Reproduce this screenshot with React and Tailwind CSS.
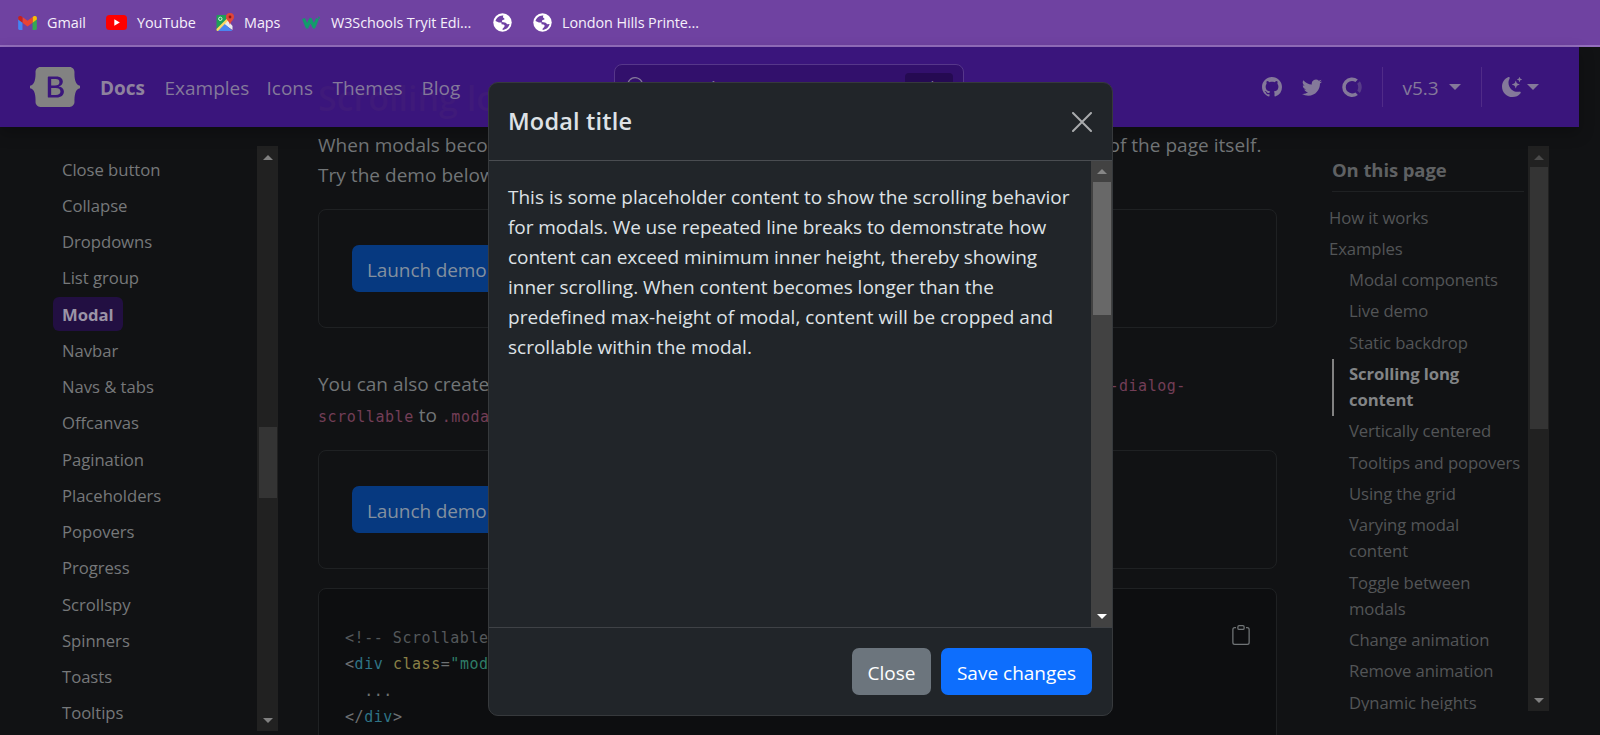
import React from "react";
import { BsGithub, BsTwitter, BsMoonStarsFill, BsClipboard, BsSearch } from "react-icons/bs";

const sideLinks = [
  "Close button", "Collapse", "Dropdowns", "List group", "Modal", "Navbar", "Navs & tabs", "Offcanvas",
  "Pagination", "Placeholders", "Popovers", "Progress", "Scrollspy", "Spinners", "Toasts", "Tooltips",
];

const subLinks = [
  ["Modal components"], ["Live demo"], ["Static backdrop"], ["Scrolling long", "content"], ["Vertically centered"],
  ["Tooltips and popovers"], ["Using the grid"], ["Varying modal", "content"], ["Toggle between", "modals"],
  ["Change animation"], ["Remove animation"], ["Dynamic heights"],
];

function Gmail() {
  return (
    <svg viewBox="0 0 20 15" className="h-[14px] w-[19px]">
      <path d="M0 2v11.500Q0 15 1.400 15H4.600V6.500z" fill="#4285f4" />
      <path d="M20 2v11.500Q20 15 18.600 15H15.400V6.500z" fill="#34a853" />
      <path d="M15.400 1.200v6L20 3.800V2c0-1.900-2-2.500-3.300-1.600z" fill="#fbbc04" />
      <path d="M4.600 7.200v-6L10 5.200l5.400-4v6L10 11.200z" fill="#ea4335" />
      <path d="M0 2v1.800l4.600 3.400v-6L3.300.4C2-.5 0 .1 0 2z" fill="#c5221f" />
    </svg>
  );
}

function YouTube() {
  return (
    <svg viewBox="0 0 21 15" className="h-[15px] w-[21px]">
      <rect width="21" height="15" rx="3.500" fill="#f00" />
      <path d="M8.300 4.300v6.400l5.500-3.200z" fill="#fff" />
    </svg>
  );
}

function Maps() {
  return (
    <svg viewBox="0 0 19 19" className="h-[19px] w-[19px]">
      <path d="M1.500 2H13v6L5 18H1.500Q.5 18 .5 17V3Q.5 2 1.500 2z" fill="#1e9e58" />
      <path d="M.5 16 11 5.500l2.500 2.500L3 18H1.500Q.5 18 .5 17z" fill="#fdd663" />
      <path d="M8.500 11.500l3.500-4 4.500 5.500v4z" fill="#e8eaed" />
      <path d="M2 18 8.800 11 16.500 18z" fill="#4a86f0" />
      <circle cx="4.300" cy="5.800" r="1.700" fill="none" stroke="#d7f0e0" />
      <path d="M14 0a4 4 0 0 1 4 4c0 3-3.300 4-4 8-.7-4-4-5-4-8a4 4 0 0 1 4-4z" fill="#e0453a" />
      <circle cx="14" cy="4" r="1.400" fill="#8b1a12" />
    </svg>
  );
}

function W3() {
  return (
    <svg viewBox="0 0 19 14" className="h-3.500 w-[19px]">
      <path d="M1.500 2.500 5 11 8.500 3.500 12 11l3.500-8.500" fill="none" stroke="#129b6c" strokeWidth="3.200" strokeLinejoin="round" />
      <path d="M16 1.200q2-.5 1.500 1-.5.800-1 .800" fill="none" stroke="#129b6c" />
    </svg>
  );
}

function Globe() {
  return (
    <svg viewBox="0 0 19 19" className="h-[19px] w-[19px]">
      <circle cx="9.500" cy="9.500" r="9.200" fill="#fff" />
      <path d="M9.300 2.400c-3.300.1-6 2.400-6.800 5.700l3.400 1.300 2.600.2v1.600l2 .4c1.300.4 1.400 1.500.7 2.300l-1.600 1.800v1.200c3.600-.1 6.200-2.400 7-5.800l-2.600.1c-.8-1.200-1.800-1.800-3.300-1.900-1.500-.2-2.300-1-1.600-1.900.9-.9 2.400-.3 2.400-1.500 0-.9-1.500-.9-1.500-2 0-.6.200-1 .5-1.400z" fill="#6f42a4" />
    </svg>
  );
}

function OpenCollective() {
  return (
    <svg viewBox="0 0 40 41" fillRule="evenodd" className="h-5 w-5 fill-[#84799a]">
      <path fillOpacity=".4" d="M32.800 21c0 2.400-.8 4.900-2 6.900l5.100 5.100c2.500-3.400 4.100-7.600 4.100-12 0-4.600-1.600-8.800-4-12.200L30.700 14c1.200 2 2 4.300 2 7z" />
      <path d="M20 33.700a12.800 12.800 0 0 1 0-25.600c2.600 0 5 .7 7 2.100L32 5a20 20 0 1 0 .1 31.900l-5-5.200a13 13 0 0 1-7 2z" />
    </svg>
  );
}

function Logo() {
  return (
    <svg viewBox="0 0 118 94" className="h-10 w-[50px] fill-[#828282]">
      <path fillRule="evenodd" clipRule="evenodd" d="M24.509 0c-6.733 0-11.715 5.893-11.492 12.284.214 6.140-.064 14.092-2.066 20.577C8.943 39.365 5.547 43.485 0 44.014v5.972c5.547.529 8.943 4.649 10.951 11.153 2.002 6.485 2.280 14.437 2.066 20.577C12.794 88.106 17.776 94 24.510 94H93.500c6.733 0 11.714-5.893 11.491-12.284-.214-6.140.064-14.092 2.066-20.577 2.009-6.504 5.396-10.624 10.943-11.153v-5.972c-5.547-.529-8.934-4.649-10.943-11.153-2.002-6.484-2.280-14.437-2.066-20.577C105.214 5.894 100.233 0 93.500 0H24.508zM80 57.863C80 66.663 73.436 72 62.543 72H44a2 2 0 01-2-2V24a2 2 0 012-2h18.437c9.083 0 15.044 4.920 15.044 12.474 0 5.302-4.010 10.049-9.119 10.880v.277C75.317 46.394 80 51.210 80 57.863zM60.521 28.340H49.948v14.934h8.905c6.884 0 10.680-2.772 10.680-7.727 0-4.643-3.264-7.207-9.012-7.207zM49.948 49.200v16.458H60.910c7.167 0 10.964-2.876 10.964-8.281 0-5.406-3.903-8.178-11.425-8.178H49.948z" />
    </svg>
  );
}

function Tri({ up, className }) {
  return (
    <svg viewBox="0 0 10 5" className={"h-[5px] w-2.5 " + className}>
      <path d={up ? "M0 5 5 0l5 5z" : "M0 0h10L5 5z"} />
    </svg>
  );
}

function Caret() {
  return (
    <svg viewBox="0 0 12 6" className="h-1.5 w-3 fill-[#84799a]">
      <path d="M0 0h12L6 6z" />
    </svg>
  );
}

function Code({ children }) {
  return <code className="font-['DejaVu_Sans_Mono',monospace] text-[15px] leading-none tracking-[0.540px] text-[#733e57]">{children}</code>;
}

function DemoCard() {
  return (
    <div className="flex h-[119px] w-[959px] rounded-lg border border-[#1f2123] pt-[35px] pl-[33px]">
      <div className="flex h-[47px] items-center rounded-[7px] bg-[#063980] px-[15px] pt-0.5 text-[19px] tracking-[-0.1px] text-[#83909f]">
        Launch demo modal
      </div>
    </div>
  );
}

export default function App() {
  return (
    <div className="relative flex h-[735px] w-[1600px] flex-col overflow-hidden bg-[#111214] font-['Open_Sans','Noto_Sans',sans-serif] font-stretch-[90%] whitespace-nowrap">
      <div className="flex h-[47px] shrink-0 items-center border-b-2 border-[#946fbe] bg-[#6f42a1] pl-[18px] text-[14.400px] tracking-[-0.050px] text-[#f6f0fb]">
        <Gmail />
        <span className="ml-2.5 w-[59px]">Gmail</span>
        <YouTube />
        <span className="ml-2.5 w-[79px]">YouTube</span>
        <Maps />
        <span className="ml-[9px] w-[58px]">Maps</span>
        <W3 />
        <span className="ml-2.5 w-[162px] tracking-[-0.080px]">W3Schools Tryit Edi...</span>
        <Globe />
        <span className="w-[21px]" />
        <Globe />
        <span className="ml-2.5 tracking-[-0.080px]">London Hills Printe...</span>
      </div>

      <header className="relative z-10 flex h-[80px] w-[1579px] shrink-0 items-center bg-[#3a157c] pl-[30px] text-[19px] text-[#84799a] shadow-[0_6px_14px_rgba(0,0,0,0.25)]">
        <div className="absolute top-[28px] left-[318px] text-[34px] leading-[46px] font-semibold text-[#3f1a7a]">Scrolling long content</div>
        <Logo />
        <nav className="relative flex items-center pt-0.5">
          <span className="ml-5 w-[64.500px] font-bold text-[#8e829e]">Docs</span>
          <span className="w-[102px]">Examples</span>
          <span className="w-[66px]">Icons</span>
          <span className="w-[89px]">Themes</span>
          <span className="w-[192px]">Blog</span>
        </nav>
        <div className="flex h-[46px] w-[350px] items-center justify-between rounded-lg border border-[#56378a] bg-[#32106c] pr-2.5 pl-3">
          <div className="flex items-center gap-4">
            <BsSearch className="h-5 w-5" />
            <span className="pt-0.5">Search</span>
          </div>
          <span className="flex h-7 w-12 items-start justify-center rounded bg-[#250a52] pt-0.5 text-[15px]">Ctrl K</span>
        </div>
        <div className="ml-[298px] flex items-center">
          <BsGithub className="h-5 w-5" />
          <BsTwitter className="ml-5 h-5 w-5" />
          <span className="ml-5"><OpenCollective /></span>
          <span className="ml-5 h-10 w-px bg-[#502b88]" />
          <span className="ml-5 w-[46px] pt-0.5">v5.3</span>
          <Caret />
          <span className="ml-5 h-10 w-px bg-[#502b88]" />
          <BsMoonStarsFill className="mr-[5px] ml-5 h-5 w-5" />
          <Caret />
        </div>
      </header>

      <div className="flex min-h-0 flex-1">
        <aside className="flex w-[318px] shrink-0 pt-[19px]">
          <div className="flex w-[257px] flex-col pt-[5px] pl-[53px] text-[16.700px] tracking-[-0.050px] text-[#76787a]">
            {sideLinks.map((t) => (
              <div key={t} className="flex h-[36.250px] shrink-0 items-center">
                <span className={"flex h-[34px] items-center rounded-md px-[9px] " + (t === "Modal" ? "bg-[#220f42] font-bold text-[#9a94a6]" : "")}>{t}</span>
              </div>
            ))}
          </div>
          <div className="flex h-[585px] w-[21px] flex-col items-center bg-[#212121] pt-[9px] pb-2">
            <Tri up className="fill-[#808080]" />
            <div className="mt-[267px] h-[71px] w-[18px] bg-[#343434]" />
            <Tri className="mt-auto fill-[#808080]" />
          </div>
        </aside>

        <main className="w-[960px] shrink-0 pt-[3px] text-[19px] leading-[30px] text-[#717577]">
          <p className="tracking-[0.035px]">
            When modals become too long for the user’s viewport or device, they scroll independent of the page itself.
            <br />
            Try the demo below to see what we mean.
          </p>
          <div className="pt-[19px]"><DemoCard /></div>
          <div className="pt-[41px]">
            <div className="h-[31px] leading-[31px] tracking-[-0.350px]">
              <span className="tracking-[0px]">You can also create</span> a scrollable modal that allows scrolling the modal body by adding <Code>.modal-dialog-</Code>
            </div>
            <div className="h-[31px] leading-[31px]">
              <Code>scrollable</Code> to <Code>.modal-dialog</Code>.
            </div>
          </div>
          <div className="pt-[19px]"><DemoCard /></div>
          <div className="mt-[19px] flex h-[200px] w-[959px] justify-between rounded-lg border border-[#1f2123] bg-[#0d0e10] pt-9 pr-[25px] pl-[26px]">
            <pre className="font-['DejaVu_Sans_Mono',monospace] text-[15px] leading-[26.250px] tracking-[0.540px] text-[#6d7173]">
              <span className="text-[#54585b]">{"<!-- Scrollable modal -->"}</span>{"\n<"}
              <span className="text-[#2f7486]">div</span>{" "}
              <span className="text-[#8a8046]">class</span>=<span className="text-[#2f7d68]">"modal-dialog modal-dialog-scrollable"</span>{">\n  ...\n</"}
              <span className="text-[#2f7486]">div</span>{">"}
            </pre>
            <BsClipboard className="h-5 w-5 text-[#717577]" />
          </div>
        </main>

        <aside className="ml-[51px] flex h-[584px] text-[16.700px] leading-[26px] tracking-[-0.1px] text-[#535557]">
          <div className="mt-[19px] flex h-[565px] w-[199px] flex-col overflow-hidden pt-[11px]">
            <div className="ml-[3px] h-[35px] w-48 shrink-0 border-b border-[#1f2123] text-[18.500px] font-bold text-[#5f6163]">On this page</div>
            <div className="pt-[13px]">How it works</div>
            <div className="pt-[5px] pb-[2.500px]">Examples</div>
            {subLinks.map((lines) => (
              <div key={lines[0]} className={"mb-[0.350px] ml-[3px] shrink-0 border-l-2 py-[2.500px] pl-[15px] " + (lines[0] === "Scrolling long" ? "border-[#828282] font-bold text-[#828486]" : "border-transparent")}>
                {lines.map((l) => <div key={l}>{l}</div>)}
              </div>
            ))}
          </div>
          <div className="mt-[19px] flex h-[565px] w-[21px] flex-col items-center bg-[#212121] pt-[9px] pb-2">
            <Tri up className="fill-[#4b4b4b]" />
            <div className="mt-[7px] h-[262px] w-[18px] bg-[#343434]" />
            <Tri className="mt-auto fill-[#808080]" />
          </div>
        </aside>
      </div>

      <div className="absolute top-[82px] left-[488px] z-20 flex h-[634px] w-[625px] flex-col overflow-hidden rounded-[10px] border border-[#36393c] bg-[#212529] text-[19px] text-[#dee2e6]">
        <div className="flex h-[78px] shrink-0 items-center justify-between border-b border-[#4a4d51] pr-5 pl-[19px]">
          <h5 className="pt-px text-[23.500px] font-semibold tracking-[0.200px]">Modal title</h5>
          <svg viewBox="0 0 20 20" className="h-5 w-5 stroke-[#a9abad]">
            <path d="M1 1 19 19M19 1 1 19" strokeWidth="2" strokeLinecap="round" />
          </svg>
        </div>
        <div className="flex h-[466px] shrink-0 justify-between pl-[19px]">
          <p className="pt-[21px] leading-[30px]">
            This is some placeholder content to show the scrolling behavior<br />
            <span className="tracking-[-0.070px]">for modals. We use repeated line breaks to demonstrate how</span><br />
            <span className="tracking-[-0.050px]">content can exceed minimum inner height, thereby showing</span><br />
            inner scrolling. When content becomes longer than the<br />
            <span className="tracking-[0.040px]">predefined max-height of modal, content will be cropped and</span><br />
            scrollable within the modal.
          </p>
          <div className="flex h-[466px] w-[21px] flex-col items-center bg-[#424242] pt-2 pb-2">
            <Tri up className="fill-[#868686]" />
            <div className="mt-2 h-[133px] w-[18px] bg-[#686868]" />
            <Tri className="mt-auto fill-white" />
          </div>
        </div>
        <div className="flex flex-1 items-center justify-end gap-2.5 border-t border-[#3f4246] pr-5">
          <button className="h-[47px] w-[79px] rounded-[7px] bg-[#6c757d] pt-[3px] text-white">Close</button>
          <button className="h-[47px] w-[151px] rounded-[7px] bg-[#0d6efd] pt-[3px] text-white">Save changes</button>
        </div>
      </div>
    </div>
  );
}
